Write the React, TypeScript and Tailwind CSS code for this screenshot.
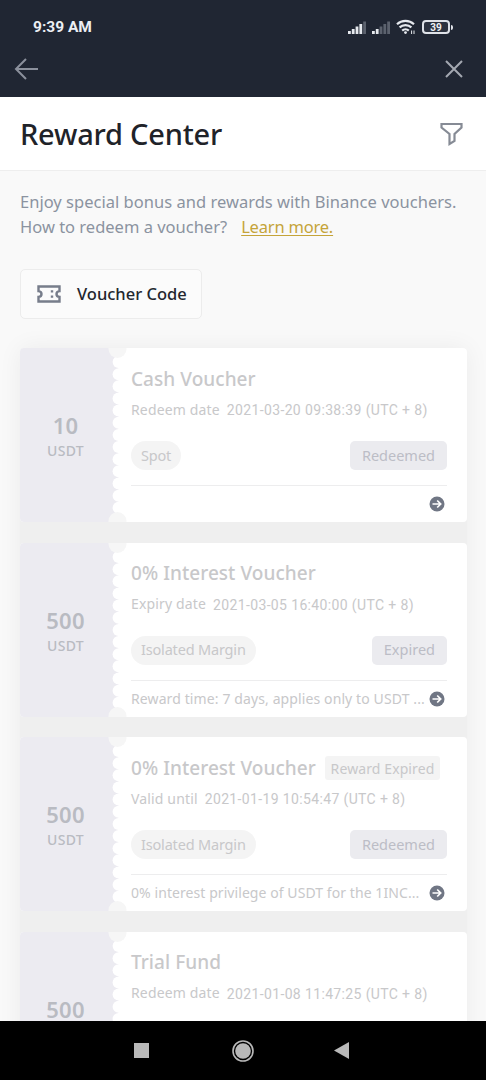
import { clsx } from "clsx";

type Voucher = {
  amount: string;
  unit?: string;
  title: string;
  dateLabel: string;
  date: string;
  tag?: string;
  badge?: string;
  status?: string;
  note?: string;
  noteClass?: string;
};

const vouchers: Voucher[] = [
  {
    amount: "10",
    unit: "USDT",
    title: "Cash Voucher",
    dateLabel: "Redeem date",
    date: "2021-03-20 09:38:39 (UTC + 8)",
    tag: "Spot",
    status: "Redeemed",
  },
  {
    amount: "500",
    unit: "USDT",
    title: "0% Interest Voucher",
    dateLabel: "Expiry date",
    date: "2021-03-05 16:40:00 (UTC + 8)",
    tag: "Isolated Margin",
    status: "Expired",
    note: "Reward time: 7 days, applies only to USDT ...",
    noteClass: "tracking-[0.11px]",
  },
  {
    amount: "500",
    unit: "USDT",
    title: "0% Interest Voucher",
    dateLabel: "Valid until",
    date: "2021-01-19 10:54:47 (UTC + 8)",
    tag: "Isolated Margin",
    badge: "Reward Expired",
    status: "Redeemed",
    note: "0% interest privilege of USDT for the 1INC...",
    noteClass: "tracking-[0.07px]",
  },
  {
    amount: "500",
    title: "Trial Fund",
    dateLabel: "Redeem date",
    date: "2021-01-08 11:47:25 (UTC + 8)",
  },
];

const holes = Array.from({ length: 13 }, (_, i) => 14 + i * 12.15);

function Signal({ strength }: { strength: number }) {
  return (
    <svg width="19" height="13" viewBox="0 0 19 13">
      {[3, 5, 7.5, 10, 12.5].map((h, i) => (
        <rect key={i} x={i * 3.8} y={13 - h} width="2.8" height={h} fill={i < strength ? "#e6e9ee" : "#5c626e"} />
      ))}
    </svg>
  );
}

function StatusBar() {
  return (
    <div className="flex h-[54px] items-center justify-between pr-[32px] pl-[33px] text-[#eceff4]">
      <span className="pt-px font-[Roboto] text-[15.5px] font-bold">9:39 AM</span>
      <div className="flex items-center">
        <Signal strength={4} />
        <span className="w-[5px]" />
        <Signal strength={2} />
        <svg className="ml-[5px]" width="20" height="16" viewBox="0 0 20 16" fill="none" stroke="#e6e9ee" strokeWidth="2.2">
          <path d="M1 5.2a12.5 12.5 0 0 1 17 0M3.6 8.4a8.6 8.6 0 0 1 11.8 0" />
          <path d="M6.2 11.6a4.8 4.8 0 0 1 6.6 0" />
          <circle cx="9.5" cy="13.6" r="1.4" fill="#e6e9ee" stroke="none" />
          <path d="M15.6 11.5v3.5M18 11.5v3.5" strokeWidth="1" />
        </svg>
        <div className="ml-[6px] flex h-[14px] w-[28px] items-center justify-center rounded-[4px] border-2 border-[#dfe2e8] bg-[#2c323f] font-[Roboto] text-[10px] leading-[10px] font-bold">
          <span className="translate-y-px">39</span>
        </div>
        <span className="mr-px ml-px h-[5px] w-[2px] rounded-r bg-[#dfe2e8]" />
      </div>
    </div>
  );
}

function TicketEdge() {
  return (
    <svg className="absolute top-0 left-[85px]" width="24" height="174" viewBox="0 0 24 174">
      <path d="M8 0h16v174H8z" fill="#fff" />
      <path d="M8 0h5.6v174H8z" fill="#ecebf1" />
      {holes.map((y) => (
        <circle key={y} cx="13.6" cy={y} r="6" fill="#fff" />
      ))}
      <circle cx="12.5" cy="1" r="9" fill="#f6f6f6" />
      <circle cx="12.5" cy="173" r="9" fill="#f6f6f6" />
    </svg>
  );
}

function ArrowCircle() {
  return (
    <svg className="shrink-0" width="16" height="16" viewBox="0 0 16 16">
      <circle cx="8" cy="8" r="7.5" fill="#707684" />
      <path d="M3.5 8h8M8.2 4.5L11.7 8l-3.5 3.5" fill="none" stroke="#fff" strokeWidth="1.7" />
    </svg>
  );
}

function VoucherCard({ voucher }: { voucher: Voucher }) {
  return (
    <div className="relative flex h-[174px] shrink-0 overflow-hidden rounded-[4px] bg-white">
      <div className="flex w-[93px] shrink-0 flex-col items-center bg-[#ecebf1] pt-[68px] pr-[2px] text-[#b9bbc2]">
        <span className="text-[22px] leading-[18px] font-semibold tracking-[0.2px]">{voucher.amount}</span>
        {voucher.unit && <span className="mt-[6px] text-[14px] leading-[21px] font-medium tracking-[0.3px]">{voucher.unit}</span>}
      </div>
      <TicketEdge />
      <div className="flex min-w-0 flex-1 flex-col pr-5 pl-[18px] whitespace-nowrap text-[#c8c8ca]">
        <div className="mt-[17px] flex h-7 items-center">
          <h2 className="text-[19px] font-medium tracking-[0.05px]">{voucher.title}</h2>
          {voucher.badge && (
            <span className="mr-[7px] ml-auto flex h-6 w-[115px] items-center justify-center rounded-[3px] bg-[#f4f4f4] text-[14px] tracking-[0.1px]">
              {voucher.badge}
            </span>
          )}
        </div>
        <div className="mt-[5px] flex h-[22px] items-center gap-[7px] text-[14px]">
          <span className="tracking-[0.15px]">{voucher.dateLabel}</span>
          <span className="pt-[3px] font-[Roboto] tracking-[0.36px]">{voucher.date}</span>
        </div>
        {voucher.tag && (
          <div className="mt-[21px] flex h-[29px] items-center justify-between text-[14.5px]">
            <span className="flex h-full items-center rounded-full bg-[#f4f4f4] px-[10px] tracking-[-0.18px]">{voucher.tag}</span>
            <span className="flex h-full items-center rounded-[5px] bg-[#ebebef] px-[12px] text-[#bcbdc6]">{voucher.status}</span>
          </div>
        )}
        {voucher.tag && (
          <div className="mt-[15px] flex flex-1 items-center justify-between border-t border-[#ededee] pr-[2px]">
            <span className={clsx("-mt-px text-[14px]", voucher.noteClass)}>{voucher.note}</span>
            <ArrowCircle />
          </div>
        )}
      </div>
    </div>
  );
}

export default function App() {
  return (
    <div className="flex h-[1080px] w-[486px] flex-col overflow-hidden bg-[#f9f9f9] font-['Noto_Sans',sans-serif]">
      <header className="h-[97px] shrink-0 bg-[#202633]">
        <StatusBar />
        <div className="flex h-[30px] items-center justify-between pr-[22px] pl-[14px]">
          <svg width="25" height="22" viewBox="0 0 25 22" fill="none" stroke="#8b909c" strokeWidth="2">
            <path d="M24 11H2M12 1L2 11l10 10" />
          </svg>
          <svg width="20" height="20" viewBox="0 0 20 20" fill="none" stroke="#a4a8b1" strokeWidth="2">
            <path d="M2 2l16 16M18 2L2 18" />
          </svg>
        </div>
      </header>

      <div className="flex h-[74px] shrink-0 items-center justify-between border-b border-[#eeeeee] bg-white pr-[22px] pl-5">
        <h1 className="-mt-px text-[29px] leading-none font-medium tracking-[-0.22px] text-[#1f2329]">Reward Center</h1>
        <svg width="25" height="24" viewBox="0 0 25 24" fill="none" stroke="#868b95" strokeWidth="2.2">
          <path d="M2.5 2h20v3.5l-7 6.5v7l-5 3V12l-8-6.5z" />
        </svg>
      </div>

      <main className="flex min-h-0 flex-1 flex-col overflow-hidden px-5 pt-[18px]">
        <p className="text-[16.5px] leading-[25px] whitespace-nowrap text-[#8b93a0]">
          <span className="block tracking-[0.02px]">Enjoy special bonus and rewards with Binance vouchers.</span>
          <span>How to redeem a voucher?</span>
          <a className="ml-[14px] tracking-[-0.2px] text-[#c5a439] underline underline-offset-2">Learn more.</a>
        </p>

        <button className="mt-[30px] flex h-[50px] w-[182px] shrink-0 items-center rounded-[5px] border border-[#ececec] bg-[#fbfbfb] pl-[16px] text-[#23272e]">
          <svg width="24" height="18" viewBox="0 0 24 18" fill="none" stroke="#777d8b" strokeWidth="2.4">
            <path d="M1.5 1.5h21v4.6c-2.2.2-3 1.4-3 2.9s.8 2.7 3 2.9v4.6h-21v-4.6c2.2-.2 3-1.4 3-2.9s-.8-2.7-3-2.9z" />
            <path d="M15 5.2v2.4M15 10.4v2.4" />
          </svg>
          <span className="ml-[16px] text-[16.5px] font-medium whitespace-nowrap">Voucher Code</span>
        </button>

        <div className="mt-[29px] flex w-[447px] flex-col gap-[20.5px] rounded-[4px] bg-[#efefef] shadow-[0_0_24px_rgba(0,0,0,0.06)]">
          {vouchers.map((voucher, i) => (
            <VoucherCard key={i} voucher={voucher} />
          ))}
        </div>
      </main>

      <nav className="flex h-[59px] shrink-0 items-center bg-black pl-[134px]">
        <span className="h-[15px] w-[15px] bg-[#b9b9b9]" />
        <svg className="ml-[83px]" width="22" height="22" viewBox="0 0 22 22">
          <circle cx="11" cy="11" r="10" fill="none" stroke="#b9b9b9" strokeWidth="1.6" />
          <circle cx="11" cy="11" r="7.8" fill="#b9b9b9" />
        </svg>
        <svg className="ml-[80px]" width="15" height="17" viewBox="0 0 15 17">
          <path d="M15 0v17L0 8.5z" fill="#b9b9b9" />
        </svg>
      </nav>
    </div>
  );
}
